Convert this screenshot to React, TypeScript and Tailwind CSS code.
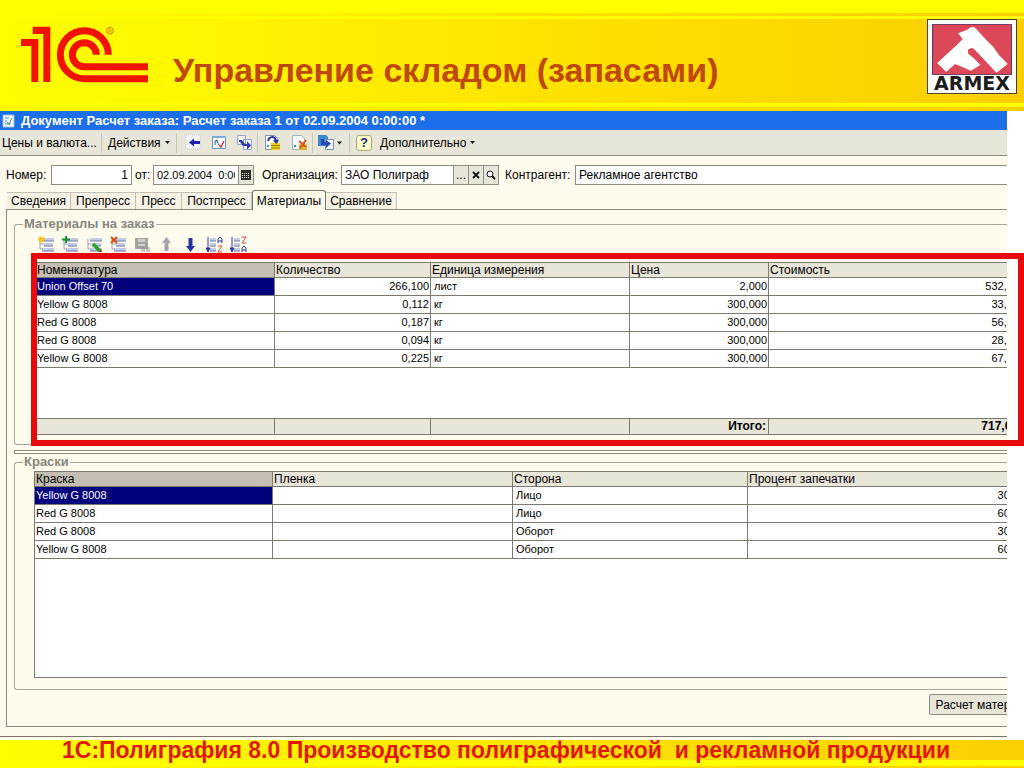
import React from "react";

type Kind = "new" | "add" | "edit" | "delete" | "save" | "up" | "down" | "az" | "za";

const bands =
  "bg-[linear-gradient(to_right,#ffff00_0%,#fff600_20%,#fde200_55%,#fccf00_100%)]";

function Logo1C() {
  return (
    <svg viewBox="60 72 390 180" className="h-[60px] w-[130px] shrink-0" aria-label="1C">
      <g fill="#f01400">
        <path d="M63 117H115V246H94V138H63Z" />
        <path d="M98 80H151V246H130V102H98Z" />
      </g>
      <g fill="none" stroke="#f01400" strokeWidth="21">
        <path d="M325 164A72 72 0 1 0 253 236H444" />
        <path d="M289 164A36 36 0 1 0 253 200H444" />
      </g>
      <circle cx="330" cy="92" r="10" fill="none" stroke="#d07800" strokeWidth="3" />
      <path d="M327 98V87H331A3 3 0 0 1 331 93H327M331 93L334 98" fill="none" stroke="#d07800" strokeWidth="2" />
    </svg>
  );
}

function ArmexLogo() {
  return (
    <div className="flex h-[75px] w-[90px] shrink-0 flex-col items-center border border-[#4a4020] bg-white pt-1">
      <svg viewBox="756 69 240 154" className="h-[51px] w-[80px] shrink-0">
        <rect x="757" y="70" width="238" height="152" fill="#dc4858" stroke="#5a3058" strokeWidth="3" />
        <path
          fill="#fff"
          d="M876 77L858 88L834 97L848 114L834 129L771 187L798 214L825 190L873 210L901 193L881 172L864 158V146L876 141L886 148L950 216L984 190L958 163L940 138L920 118L884 79Z"
        />
      </svg>
      <span className="font-['DejaVu_Sans',sans-serif] text-[19px] leading-[17px] font-bold text-[#1c1c1c]">ARMEX</span>
    </div>
  );
}

function RowIcon({ kind }: { kind: Kind }) {
  const list = (
    <g>
      <path d="M4 2h12v3H4zM6 7h9v3H6zM4 12h12v3H4z" fill="#c3cbe6" />
      <path d="M4 5h12M6 10h9M4 15h12" stroke="#6f78a8" />
      <path d="M2 3v10M2 8h4M2 13h3" stroke="#9aa0b8" fill="none" />
    </g>
  );
  const sort = (
    <g>
      <path d="M4 2h6v3H4zM4 7h6v3H4zM4 12h6v3H4z" fill="#c3cbe6" />
      <path d="M4 5h6M4 10h6M4 15h6" stroke="#6f78a8" />
      <path d="M2 1v13M0 12l2 4l2-4z" stroke="#3038a0" fill="#3038a0" />
    </g>
  );
  const a = "M0 6V2L2 0L4 2V6M0 4H4";
  const z = "M0 0H4L0 6H4";
  return (
    <svg viewBox="0 0 17 17" className="h-[17px] w-[17px]" fill="none">
      {(kind === "new" || kind === "add" || kind === "edit" || kind === "delete") && list}
      {kind === "new" && <path d="M3 0v7M0 3.500h7M1 1l5 5M6 1L1 6" stroke="#f0c820" strokeWidth="1.300" />}
      {kind === "add" && <path d="M4 0v7M0 3.500h8" stroke="#189030" strokeWidth="2" />}
      {kind === "edit" && (
        <g>
          <path d="M7 8L14 15" stroke="#30a030" strokeWidth="3.500" />
          <path d="M13 16l3 0l-1-3z" fill="#805020" />
        </g>
      )}
      {kind === "delete" && <path d="M1 1l6 6M7 1L1 7" stroke="#e04818" strokeWidth="2" />}
      {kind === "save" && (
        <g>
          <path d="M1 2h13v11H1z" fill="#a3a3a0" />
          <path d="M4 3h7v3H4zM4 8h7v2H4z" fill="#d0d0ca" />
          <path d="M8 11v5M10 11v5M13 11v5M15 11v5" stroke="#92928e" />
        </g>
      )}
      {kind === "up" && <path d="M8.500 1L13 7H10.500V15H6.500V7H4Z" fill="#a4a4aa" />}
      {kind === "down" && <path d="M8.500 16L13 10H10.500V2H6.500V10H4Z" fill="#2434a4" />}
      {(kind === "az" || kind === "za") && (
        <g>
          {sort}
          <g transform="translate(12 1)">
            <path d={kind === "az" ? a : z} stroke={kind === "az" ? "#3038a0" : "#e04030"} />
          </g>
          <g transform="translate(12 10)">
            <path d={kind === "az" ? z : a} stroke={kind === "az" ? "#e04030" : "#3038a0"} />
          </g>
        </g>
      )}
    </svg>
  );
}

const rowIcons: { kind: Kind; label: string }[] = [
  { kind: "new", label: "Новый" },
  { kind: "add", label: "Добавить" },
  { kind: "edit", label: "Изменить" },
  { kind: "delete", label: "Удалить" },
  { kind: "save", label: "Сохранить" },
  { kind: "up", label: "Вверх" },
  { kind: "down", label: "Вниз" },
  { kind: "az", label: "По возрастанию" },
  { kind: "za", label: "По убыванию" },
];

function Svg({ children, wide }: { children: React.ReactNode; wide?: boolean }) {
  return (
    <svg viewBox={wide ? "0 0 26 17" : "0 0 17 17"} className={wide ? "h-[17px] w-[26px]" : "h-[17px] w-[17px]"} fill="none">
      {children}
    </svg>
  );
}

const Sep = () => <span className="h-5 w-px shrink-0 bg-[#c9c5b8]" />;
const Caret = () => (
  <svg viewBox="0 0 5 3" className="h-[3px] w-[5px]">
    <path d="M0 0H5L2.500 3Z" fill="#111" />
  </svg>
);

function Toolbar() {
  return (
    <div className="flex h-[26px] items-center border-b border-[#8d8b80] bg-[#e8e5d9] pl-0.5 whitespace-nowrap">
      <button className="w-[99px] text-left">Цены и валюта...</button>
      <Sep />
      <button className="flex w-[74px] items-center gap-1 pl-1.5">
        Действия <Caret />
      </button>
      <Sep />
      <div className="flex w-20 items-center justify-between pr-1 pl-2">
        <button aria-label="Перейти">
          <Svg>
            <path d="M1 1h14v14H1z" fill="#f4f4fa" stroke="#c8cce0" strokeDasharray="1 1" />
            <path d="M4 8.500L9 4.500V7H15V10H9V12.500Z" fill="#2020b0" />
          </Svg>
        </button>
        <button aria-label="Обновить">
          <Svg>
            <path d="M1.500 2.500h13v12h-13z" fill="#fff" stroke="#6098c8" />
            <path d="M1 2h14v2H1z" fill="#78b0dc" />
            <path d="M4 11V7L7 6M5 6l3 5" stroke="#3050a0" />
            <path d="M8 11l2 2l3-6" stroke="#d03838" strokeWidth="1.500" />
          </Svg>
        </button>
        <button aria-label="Скопировать">
          <Svg>
            <path d="M1.500 1.500h8v9h-8zM7.500 5.500h8v10h-8z" fill="#f4f8ff" stroke="#90a8d0" />
            <path d="M3 6h3l3 4h2V7l4 4.500l-4 4V12H7L4 8H3z" fill="#3038b8" />
          </Svg>
        </button>
      </div>
      <Sep />
      <div className="flex w-[54px] items-center justify-between pr-1 pl-1.5">
        <button aria-label="Провести">
          <Svg>
            <path d="M1.500 1.500h9l3 3v11h-12z" fill="#fff" stroke="#7890b8" />
            <path d="M7 9h9v7H7z" fill="#f0d818" />
            <path d="M7 11.500h9M7 14h9" stroke="#907810" />
            <path d="M4 7C5 2 10 2 12 6" stroke="#283098" strokeWidth="2" />
            <path d="M9 6h6l-3 4z" fill="#283098" />
            <path d="M3 12h2" stroke="#3090d0" strokeWidth="2" />
          </Svg>
        </button>
        <button aria-label="Отменить проведение">
          <Svg>
            <path d="M1.500 1.500h9l3 3v11h-12z" fill="#fff" stroke="#a0b0c8" />
            <path d="M8 10h8v6H8z" fill="#f0d040" />
            <path d="M8 12.500h8M8 15h8" stroke="#b08820" />
            <path d="M8 7l7 6M15 6l-6 8" stroke="#e05020" strokeWidth="2" />
            <path d="M3 12h2" stroke="#3090d0" strokeWidth="2" />
          </Svg>
        </button>
      </div>
      <Sep />
      <button className="flex w-9 items-center pl-1" aria-label="Ввести на основании">
        <Svg wide>
          <path d="M1 1h8l2 2v9H1z" fill="#3888cc" />
          <path d="M8.500 5.500h8v10h-8z" fill="#f4f8ff" stroke="#7890b8" />
          <path d="M4 5v6h5v3l5-4.500L9 6v2H7V5z" fill="#2848b8" />
          <path d="M20 7.500h5L22.500 10.500Z" fill="#111" />
        </Svg>
      </button>
      <Sep />
      <button
        className="ml-1.5 h-4 w-4 rounded-[3px] border border-[#a8a878] bg-[#ffffc8] text-[13px] leading-[14px] font-bold text-[#202878]"
        aria-label="Справка"
      >
        ?
      </button>
      <button className="ml-2 flex items-center gap-1">
        Дополнительно <Caret />
      </button>
    </div>
  );
}

const field = "h-5 border border-[#8f8d82] bg-white px-[3px] text-xs outline-none";
const mini =
  "flex h-5 w-[15px] shrink-0 items-center justify-center border border-l-0 border-[#8f8d82] bg-[#e8e5d9] text-xs leading-none";

function Fields() {
  return (
    <div className="flex items-center pt-[9px] whitespace-nowrap">
      <label htmlFor="num" className="w-[51px] pl-1.5 leading-5">Номер:</label>
      <input id="num" defaultValue="1" className={`${field} w-[81px] text-right`} />
      <label htmlFor="date" className="w-[21px] pl-[3px] leading-5">от:</label>
      <input id="date" defaultValue="02.09.2004  0:00:00" className="h-5 w-[86px] border border-[#8f8d82] bg-white pr-[3px] pl-[3px] text-[11px] whitespace-pre outline-none" />
      <button className={mini} aria-label="Календарь">
        <svg viewBox="0 0 10 10" className="h-2.5 w-2.5">
          <path d="M0 0H10V10H0Z" fill="#302c28" />
          <path d="M1 3.500H9M1 5.500H9M1 7.500H9" stroke="#e8e5d9" strokeDasharray="1 1" />
        </svg>
      </button>
      <label htmlFor="org" className="w-[87px] pl-2 leading-5">Организация:</label>
      <input id="org" defaultValue="ЗАО Полиграф" className={`${field} w-[113px]`} />
      <button className={mini}>...</button>
      <button className={mini} aria-label="Очистить">
        <svg viewBox="0 0 8 8" className="h-2 w-2">
          <path d="M1 1L7 7M7 1L1 7" stroke="#111" strokeWidth="1.800" />
        </svg>
      </button>
      <button className={mini} aria-label="Открыть">
        <svg viewBox="0 0 10 10" className="h-2.5 w-2.5" fill="none" stroke="#111">
          <circle cx="4" cy="4" r="3" fill="#fff" />
          <path d="M6 6L9 9" strokeWidth="2" />
        </svg>
      </button>
      <label htmlFor="agent" className="w-[76px] pl-1.5 leading-5">Контрагент:</label>
      <input id="agent" defaultValue="Рекламное агентство" className="h-5 min-w-0 flex-1 border border-r-0 border-[#8f8d82] bg-white px-[3px] text-xs outline-none" />
    </div>
  );
}

const tabs = [
  { t: "Сведения", w: "w-[64px]" },
  { t: "Препресс", w: "w-[65px]" },
  { t: "Пресс", w: "w-[46px]" },
  { t: "Постпресс", w: "w-[70px]" },
  { t: "Материалы", w: "w-[74px]" },
  { t: "Сравнение", w: "w-[71px]" },
];

const materials = [
  ["Union Offset 70", "266,100", "лист", "2,000", "532,20"],
  ["Yellow G 8008", "0,112", "кг", "300,000", "33,60"],
  ["Red G 8008", "0,187", "кг", "300,000", "56,10"],
  ["Red G 8008", "0,094", "кг", "300,000", "28,20"],
  ["Yellow G 8008", "0,225", "кг", "300,000", "67,50"],
];

const inks = [
  ["Yellow G 8008", "", "Лицо", "30,0"],
  ["Red G 8008", "", "Лицо", "60,0"],
  ["Red G 8008", "", "Оборот", "30,0"],
  ["Yellow G 8008", "", "Оборот", "60,0"],
];

const th = "h-[15px] overflow-hidden border-r border-b border-[#7c7a70] py-0 pl-px text-left text-xs leading-[14px] font-normal";
const td = "h-[18px] overflow-hidden border-r border-b border-[#7c7a70] py-0 leading-[17px]";

function Grid({
  heads,
  widths,
  rows,
  numeric,
  total,
}: {
  heads: string[];
  widths: string[];
  rows: string[][];
  numeric: number[];
  total?: string[];
}) {
  return (
    <table className="w-[calc(100%+14px)] table-fixed border-separate border-spacing-0 text-[11px]">
      <colgroup>
        {widths.map((w, i) => (
          <col key={i} className={w} />
        ))}
      </colgroup>
      <thead>
        <tr>
          {heads.map((h, i) => (
            <th key={h} className={`${th} ${i === 0 ? "bg-[#c4bfb2]" : "bg-[#e8e5d9]"}`}>{h}</th>
          ))}
        </tr>
      </thead>
      <tbody>
        {rows.map((r, ri) => (
          <tr key={ri}>
            {r.map((c, ci) => (
              <td
                key={ci}
                className={`${td} ${numeric.includes(ci) ? "pr-px text-right" : ci === 0 ? "pl-px" : "pl-[3px]"} ${
                  ri === 0 && ci === 0 ? "bg-[#00007c] text-white" : "bg-white"
                }`}
              >
                {c}
              </td>
            ))}
          </tr>
        ))}
        {total && (
          <tr>
            <td colSpan={heads.length} className="h-[51px] border-b border-[#7c7a70] p-0" />
          </tr>
        )}
      </tbody>
      {total && (
        <tfoot>
          <tr>
            {total.map((c, i) => (
              <td key={i} className="h-4 border-r border-b border-[#7c7a70] bg-[#e8e5d9] py-0 pr-0.5 text-right text-xs leading-[15px] font-bold">
                {c}
              </td>
            ))}
          </tr>
        </tfoot>
      )}
    </table>
  );
}

const group = "min-w-0 rounded-l-[3px] border border-r-0 border-[#aaa89c]";
const legend = "ml-2 px-px text-[13px] leading-4 font-bold text-[#87867c]";

export default function App() {
  return (
    <div className="flex min-h-screen flex-col overflow-hidden bg-white font-['Liberation_Sans',Arial,sans-serif] text-xs text-black">
      <header className={`flex flex-col ${bands}`}>
        <div className="h-[13px] bg-[#ffff00]" />
        <div className="h-[3px]" />
        <div className="h-[3px] bg-[#ffff00]" />
        <div className="flex h-[84px] items-start pr-[7px] pl-5">
          <div className="pt-[5px]">
            <Logo1C />
          </div>
          <h1 className="flex-1 pt-8 pl-[23px] text-[34px] leading-[38px] font-bold whitespace-nowrap text-[#c04808]">
            Управление складом (запасами)
          </h1>
          <ArmexLogo />
        </div>
        <div className="h-1 bg-[#ffff00]" />
        <div className="h-1" />
      </header>

      <main className="mr-[17px] flex flex-1 flex-col bg-[#fffcee]">
        <h2 className="flex h-[19px] items-center gap-1.5 bg-[#1c6fe8] pl-0.5 text-[13px] leading-4 font-bold whitespace-nowrap text-white">
          <svg viewBox="0 0 13 14" className="h-3.5 w-[13px]">
            <path d="M1 1H12V13H1Z" fill="#f8fcff" stroke="#98b8e8" />
            <path d="M3 4H7M3 7H5M3 10H9" stroke="#5080c0" />
            <path d="M5 8L7 10L10 4" fill="none" stroke="#309060" />
          </svg>
          Документ Расчет заказа: Расчет заказа 1 от 02.09.2004 0:00:00 *
        </h2>
        <Toolbar />
        <Fields />
        <div className="flex h-6 items-end pl-[7px]" role="tablist">
          {tabs.map((tab) => (
            <button
              key={tab.t}
              role="tab"
              aria-selected={tab.t === "Материалы"}
              className={`${tab.w} text-center whitespace-nowrap ${
                tab.t === "Материалы"
                  ? "z-10 -mb-px h-5 rounded-t-[3px] border border-b-0 border-[#77756b] bg-[#fffcee]"
                  : "h-[17px] border border-b-0 border-l-0 border-[#c4c1b4] bg-[#f6f3e6]"
              }`}
            >
              {tab.t}
            </button>
          ))}
        </div>

        <section className="ml-1.5 flex flex-1 flex-col border-t border-b border-l border-[#8d8b80] pt-1.5 pl-[7px]">
          <fieldset className={`${group} pb-[9px]`}>
            <legend className={legend}>Материалы на заказ</legend>
            <div className="flex h-[30px] items-start gap-[7px] pt-1 pl-[23px]">
              {rowIcons.map((r) => (
                <button key={r.kind} aria-label={r.label}>
                  <RowIcon kind={r.kind} />
                </button>
              ))}
            </div>
            <div className="relative ml-[21px]">
              <div className="overflow-hidden border-t border-[#7c7a70] bg-white">
                <Grid
                  heads={["Номенклатура", "Количество", "Единица измерения", "Цена", "Стоимость"]}
                  widths={["w-[239px]", "w-[156px]", "w-[199px]", "w-[139px]", "w-auto"]}
                  rows={materials}
                  numeric={[1, 3, 4]}
                  total={["", "", "", "Итого:", "717,60"]}
                />
              </div>
              <div className="pointer-events-none absolute -top-[9px] -right-[17px] -bottom-[11px] -left-[5px] border-6 border-[#e60a0a]" />
            </div>
          </fieldset>

          <div className="mt-[5px] h-1 shrink-0 border border-r-0 border-[#8d8b80]" />

          <fieldset className={`${group} flex flex-1 flex-col pb-[11px]`}>
            <legend className={legend}>Краски</legend>
            <div className="mt-px ml-[19px] min-h-[207px] flex-1 overflow-hidden border border-r-0 border-[#7c7a70] bg-white">
              <Grid
                heads={["Краска", "Пленка", "Сторона", "Процент запечатки"]}
                widths={["w-[238px]", "w-[240px]", "w-[235px]", "w-auto"]}
                rows={inks}
                numeric={[3]}
              />
            </div>
          </fieldset>
          <div className="flex h-9 items-start justify-end overflow-hidden pt-1">
            <button className="-mr-[44px] h-[21px] rounded-[2px] border border-[#8d8b80] bg-[#e8e5d9] px-1.5 whitespace-nowrap">
              Расчет материалов
            </button>
          </div>
        </section>
        <div className="mt-[9px] mb-[3px] h-px bg-[#77756b]" />
      </main>

      <footer className={`flex flex-col ${bands}`}>
        <p className="z-10 h-5 pl-[62px] text-[23px] leading-5 font-bold whitespace-pre text-[#e01808]">
          1С:Полиграфия 8.0 Производство полиграфической  и рекламной продукции
        </p>
        <div className="h-1.5 bg-[#ffff00]" />
        <div className="h-0.5" />
      </footer>
    </div>
  );
}
